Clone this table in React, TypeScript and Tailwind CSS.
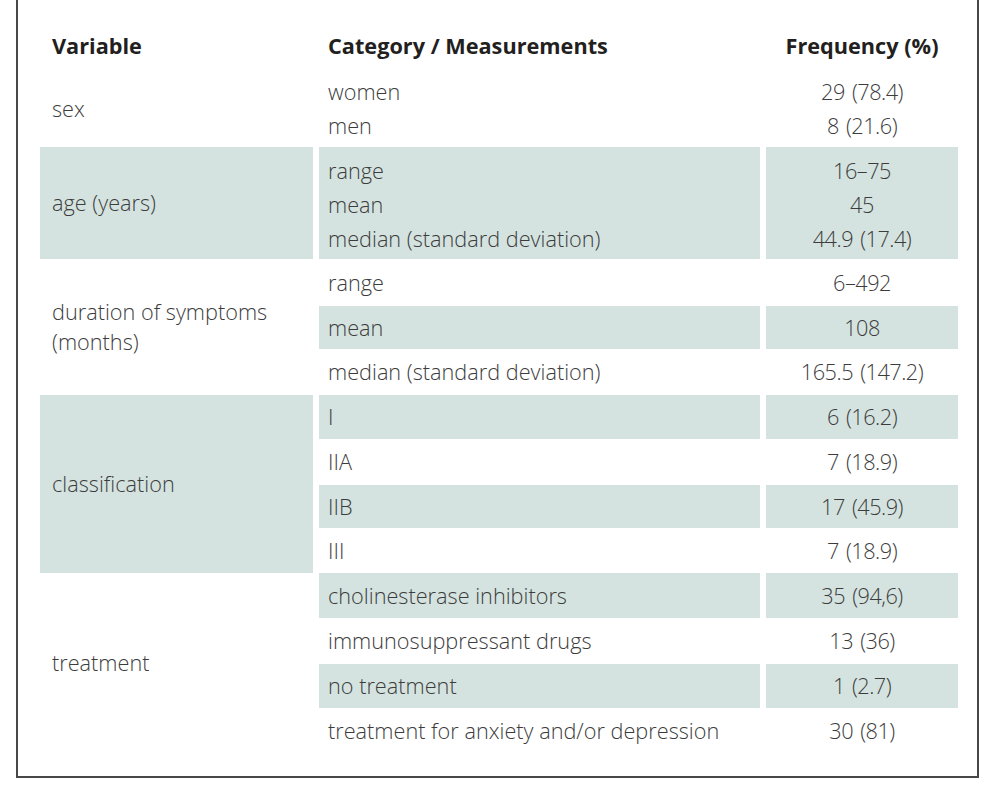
import React from "react";

const shade = "bg-[#d4e3df]";

function Cat({ lines, shaded, h, extra }: { lines: string[]; shaded?: boolean; h: number; extra?: string }) {
  return (
    <div
      className={`flex flex-col justify-center pl-[9px] ${shaded ? shade : ""} ${extra ?? ""}`}
      style={{ height: h }}
    >
      {lines.map((l, i) => (
        <div key={i} className="leading-[34px] whitespace-nowrap">
          {l}
        </div>
      ))}
    </div>
  );
}

function Freq({ lines, shaded, h, extra }: { lines: string[]; shaded?: boolean; h: number; extra?: string }) {
  return (
    <div
      className={`flex flex-col justify-center items-center tracking-[-0.5px] [word-spacing:2px] ${shaded ? shade : ""} ${extra ?? ""}`}
      style={{ height: h }}
    >
      {lines.map((l, i) => (
        <div key={i} className="leading-[34px] whitespace-nowrap">
          {l}
        </div>
      ))}
    </div>
  );
}

type Group = {
  variable: string[];
  shaded: boolean;
  vextra?: string;
  rows: { cat: string[]; freq: string[]; shaded: boolean; h: number; extra?: string }[];
};

const groups: Group[] = [
  {
    variable: ["sex"],
    shaded: false,
    vextra: "pb-[4px]",
    rows: [{ cat: ["women", "men"], freq: ["29 (78.4)", "8 (21.6)"], shaded: false, h: 72, extra: "pb-[4px]" }],
  },
  {
    variable: ["age (years)"],
    shaded: true,
    rows: [
      {
        cat: ["range", "mean", "median (standard deviation)"],
        freq: ["16–75", "45", "44.9 (17.4)"],
        shaded: true,
        h: 112,
        extra: "pt-[3px]",
      },
    ],
  },
  {
    variable: ["duration of symptoms", "(months)"],
    shaded: false,
    rows: [
      { cat: ["range"], freq: ["6–492"], shaded: false, h: 47 },
      { cat: ["mean"], freq: ["108"], shaded: true, h: 43 },
      { cat: ["median (standard deviation)"], freq: ["165.5 (147.2)"], shaded: false, h: 46 },
    ],
  },
  {
    variable: ["classification"],
    shaded: true,
    rows: [
      { cat: ["I"], freq: ["6 (16.2)"], shaded: true, h: 44 },
      { cat: ["IIA"], freq: ["7 (18.9)"], shaded: false, h: 46 },
      { cat: ["IIB"], freq: ["17 (45.9)"], shaded: true, h: 43 },
      { cat: ["III"], freq: ["7 (18.9)"], shaded: false, h: 45 },
    ],
  },
  {
    variable: ["treatment"],
    shaded: false,
    rows: [
      { cat: ["cholinesterase inhibitors"], freq: ["35 (94,6)"], shaded: true, h: 45 },
      { cat: ["immunosuppressant drugs"], freq: ["13 (36)"], shaded: false, h: 46 },
      { cat: ["no treatment"], freq: ["1 (2.7)"], shaded: true, h: 44 },
      { cat: ["treatment for anxiety and/or depression"], freq: ["30 (81)"], shaded: false, h: 45 },
    ],
  },
];

export default function App() {
  return (
    <div
      className="w-[992px] h-[800px] bg-white text-[#3c3c3c]"
      style={{ fontFamily: '"Open Sans", "Noto Sans", sans-serif' }}
    >
      <div className="ml-[16px] w-[963px] h-[778px] border-l-2 border-r-2 border-b-2 border-[#474747] pl-[22px] pt-[18px]">
        <div className="w-[918px] text-[21.7px] font-light">
          {/* header */}
          <div className="grid grid-cols-[273px_441px_192px] gap-x-[6px] h-[57px] items-center font-bold text-[#231f20]">
            <div className="pl-[12px]">Variable</div>
            <div className="pl-[9px]">Category / Measurements</div>
            <div className="text-center">Frequency (%)</div>
          </div>
          {groups.map((g, gi) => (
            <div key={gi} className="grid grid-cols-[273px_639px] gap-x-[6px]">
              <div
                className={`flex flex-col justify-center pl-[12px] leading-[30px] ${g.shaded ? shade : ""} ${g.vextra ?? ""}`}
              >
                {g.variable.map((v, i) => (
                  <div key={i} className="whitespace-nowrap">{v}</div>
                ))}
              </div>
              <div className="flex flex-col">
                {g.rows.map((r, ri) => (
                  <div key={ri} className="grid grid-cols-[441px_192px] gap-x-[6px]">
                    <Cat lines={r.cat} shaded={r.shaded} h={r.h} extra={r.extra} />
                    <Freq lines={r.freq} shaded={r.shaded} h={r.h} extra={r.extra} />
                  </div>
                ))}
              </div>
            </div>
          ))}
        </div>
      </div>
    </div>
  );
}
